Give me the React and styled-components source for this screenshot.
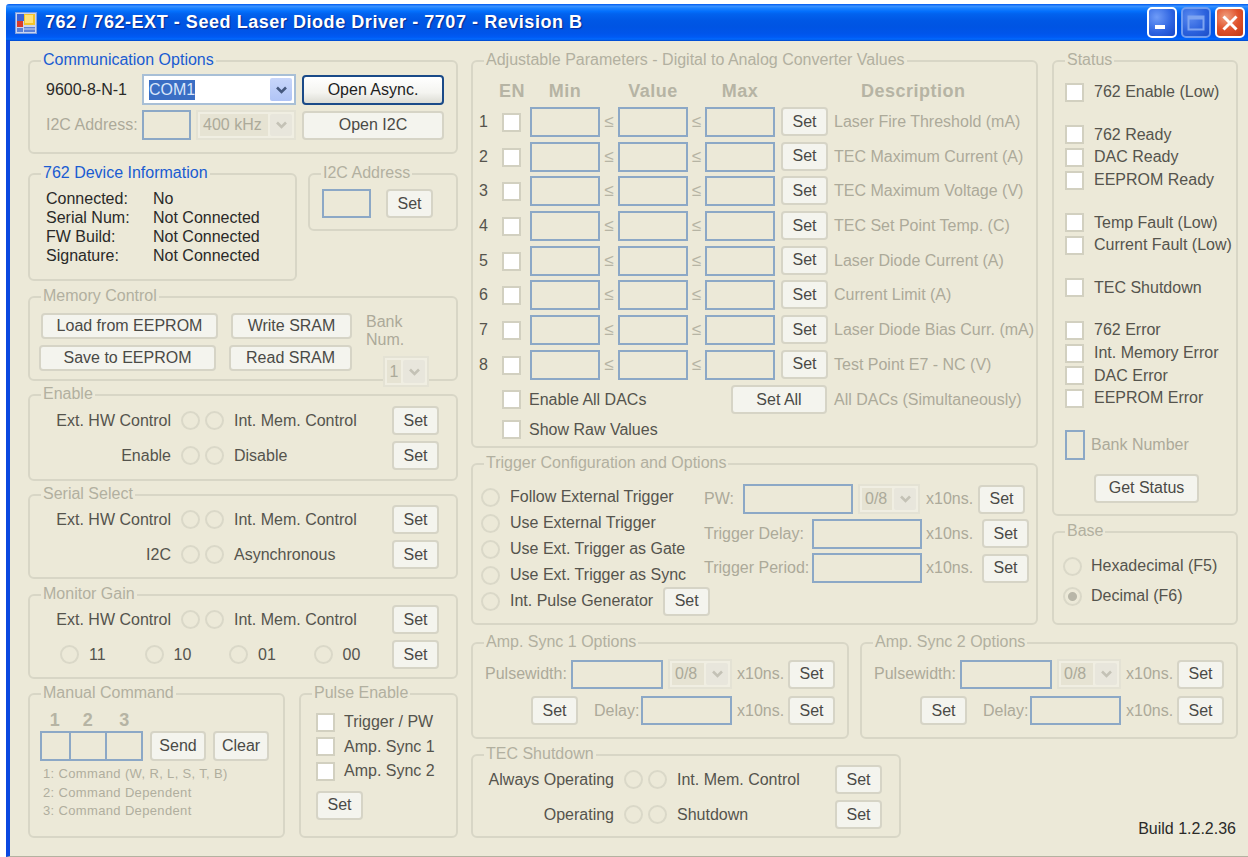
import { Fragment } from "react";
import styled, { createGlobalStyle } from "styled-components";

const FACE = "#ECE9D8";
const GREY = "#ACAA9A";
const MID = "#55544D";
const DARK = "#2A2A28";

const GlobalStyle = createGlobalStyle`
  html, body {
    margin: 0;
    background: #fff;
    overflow: hidden;
  }
  body {
    font-family: "Liberation Sans", Arial, sans-serif;
    font-size: 16px;
  }
`;

const Screen = styled.div`
  width: 1248px;
  height: 857px;
  box-sizing: border-box;
  padding: 4px 0 0 6px;
`;

const Win = styled.div`
  height: 853px;
  display: flex;
  flex-direction: column;
`;

const TitleBar = styled.header`
  height: 37px;
  flex: none;
  display: flex;
  align-items: center;
  padding: 0 3px 0 9px;
  border-radius: 3px 0 0 0;
  background: linear-gradient(180deg, #0058ee 0%, #3a93ff 6%, #1a80ff 12%, #036ffc 20%, #0262ee 27%, #0057e5 45%, #0054e3 62%, #0055eb 80%, #005bf5 90%, #026afe 95%, #0046c8 100%);
`;

const TitleText = styled.h1`
  margin: 0 0 0 8px;
  flex: 1;
  color: #fff;
  font-size: 18px;
  font-weight: 700;
  letter-spacing: 0.55px;
  white-space: nowrap;
  text-shadow: 1px 1px 1px #0a2a90;
`;

const WinButton = styled.div`
  width: 30px;
  height: 31px;
  box-sizing: border-box;
  margin-left: 4px;
  border: 2px solid ${(p) => (p.$dim ? "#6f9cf0" : "#fff")};
  border-radius: 5px;
  display: flex;
  align-items: center;
  justify-content: center;
  background: ${(p) =>
    p.$close
      ? "radial-gradient(circle at 35% 30%, #f0a080 0%, #e0522c 50%, #c23a14 100%)"
      : p.$dim
      ? "radial-gradient(circle at 30% 30%, #5a8af0 0%, #2a60dc 60%, #1c4ec8 100%)"
      : "radial-gradient(circle at 30% 30%, #6f9cf8 0%, #2c62e0 60%, #1848c8 100%)"};
`;

const WinBody = styled.main`
  flex: 1;
  display: flex;
  gap: 13px;
  padding: 19px 0 0 18px;
  background: ${FACE};
  border-left: 4px solid #0a48e0;
  border-bottom: 1px solid #b4b2a0;
`;

const LeftColumn = styled.div`
  width: 430px;
  flex: none;
`;

const RightColumn = styled.div`
  width: 767px;
  flex: none;
`;

const Row = styled.div`
  display: flex;
  gap: ${(p) => p.$gap || 0}px;
  margin-top: ${(p) => p.$mt || 0}px;
`;

const Group = styled.section`
  position: relative;
  box-sizing: border-box;
  flex: ${(p) => (p.$w ? "none" : "1")};
  width: ${(p) => (p.$w ? `${p.$w}px` : "auto")};
  height: ${(p) => p.$h}px;
  margin-top: ${(p) => p.$mt || 0}px;
  padding: ${(p) => p.$pad};
  border: 2px solid #d8d6c6;
  border-radius: 6px;
`;

const Legend = styled.span`
  position: absolute;
  top: -12px;
  left: 11px;
  padding: 0 2px;
  background: ${FACE};
  line-height: 20px;
  white-space: nowrap;
  color: ${(p) => (p.$blue ? "#1a5cd2" : "#b2b0a0")};
`;

const Text = styled.span`
  display: inline-block;
  flex: none;
  width: ${(p) => (p.$w ? `${p.$w}px` : "auto")};
  margin-left: ${(p) => p.$ml || 0}px;
  text-align: ${(p) => p.$align || "left"};
  white-space: nowrap;
  color: ${(p) => p.$color || MID};
`;

const Button = styled.button`
  flex: none;
  box-sizing: border-box;
  display: block;
  width: ${(p) => p.$w || 47}px;
  height: ${(p) => p.$h || 29}px;
  margin-left: ${(p) => p.$ml || 0}px;
  padding: 0;
  font: inherit;
  color: ${(p) => (p.$active ? "#1e1e1e" : "#4a4a46")};
  border: 2px solid ${(p) => (p.$active ? "#1a4a88" : "#d6d4c6")};
  border-radius: 4px;
  background: ${(p) =>
    p.$active
      ? "linear-gradient(180deg, #ffffff 0%, #f4f4f0 60%, #dcdcd4 100%)"
      : "#f4f4ee"};
`;

const TextBox = styled.input`
  flex: none;
  box-sizing: border-box;
  display: block;
  width: ${(p) => p.$w}px;
  height: ${(p) => p.$h || 30}px;
  margin: 0 0 0 ${(p) => p.$ml || 0}px;
  padding: 0;
  background: ${FACE};
  border: 2px solid #8ca8c6;
`;

const Check = styled.input.attrs({ type: "checkbox" })`
  appearance: none;
  flex: none;
  display: block;
  box-sizing: border-box;
  width: 19px;
  height: 19px;
  margin: 0;
  background: #fff;
  border: 2px solid #d2d0c0;
`;

const Radio = styled.input.attrs({ type: "radio" })`
  appearance: none;
  flex: none;
  display: block;
  box-sizing: border-box;
  width: 19px;
  height: 19px;
  margin: 0;
  border: 2px solid #dad8c8;
  border-radius: 50%;
  background: ${FACE};
  &:checked {
    background: radial-gradient(circle, #b8b6a8 0 4px, ${FACE} 5px);
  }
`;

const Combo = styled.div`
  flex: none;
  box-sizing: border-box;
  display: flex;
  width: ${(p) => p.$w}px;
  height: ${(p) => p.$h || 30}px;
  margin-left: ${(p) => p.$ml || 0}px;
  padding: 2px;
  background: ${(p) => (p.$off ? "#f0eee2" : "#fff")};
  border: 2px solid ${(p) => (p.$off ? "#e4e2d4" : "#a8bfd6")};
`;

const ComboValue = styled.div`
  flex: 1;
  display: flex;
  align-items: center;
  padding: 0 3px;
  margin-right: 2px;
  background: ${(p) => (p.$off ? "#e6e3d3" : "#fff")};
  color: ${(p) => (p.$off ? GREY : DARK)};
`;

const Selected = styled.span`
  background: #3a6ec4;
  color: #d8e6fa;
  line-height: 20px;
`;

const ComboArrow = styled.div`
  flex: none;
  width: 22px;
  display: flex;
  align-items: center;
  justify-content: center;
  border-radius: 2px;
  background: ${(p) => (p.$off ? "#e8e6dc" : "linear-gradient(180deg, #c8d6fa, #b0c4f6)")};
  color: ${(p) => (p.$off ? "#c4c2b6" : "#45587e")};
`;

const Chevron = () => (
  <svg width="13" height="10" viewBox="0 0 13 10">
    <path d="M2 2.5l4.5 4.5 4.5-4.5" fill="none" stroke="currentColor" strokeWidth="2.6" />
  </svg>
);

const ComboBox = ({ w, h, ml, off, children }) => (
  <Combo $w={w} $h={h} $ml={ml} $off={off}>
    <ComboValue $off={off}>{children}</ComboValue>
    <ComboArrow $off={off}>
      <Chevron />
    </ComboArrow>
  </Combo>
);

/* communication block */
const ControlRow = styled.div`
  display: flex;
  align-items: center;
  margin-top: ${(p) => p.$mt || 0}px;
`;

const InfoGrid = styled.div`
  display: grid;
  grid-template-columns: 107px 1fr;
  grid-auto-rows: 19px;
  line-height: 19px;
  color: ${DARK};
`;

const MemoryColumn = styled.div`
  flex: none;
  width: ${(p) => p.$w}px;
  display: flex;
  flex-direction: column;
  gap: 6px;
`;

const BankColumn = styled.div`
  width: 79px;
  margin-left: 14px;
  display: flex;
  flex-direction: column;
  align-items: center;
  gap: 7px;
  line-height: 18px;
  color: ${GREY};
`;

/* rows with a radio pair between two captions */
const ToggleStack = styled.div`
  display: flex;
  flex-direction: column;
  gap: 6px;
`;

const ToggleLine = styled.div`
  height: 29px;
  display: flex;
  align-items: center;
`;

const RadioPair = styled.div`
  display: flex;
  gap: 5px;
  margin: 0 10px;
`;

const GainOptions = styled.div`
  width: 351px;
  flex: none;
  box-sizing: border-box;
  padding-left: 19px;
  display: grid;
  grid-template-columns: repeat(3, 84.5px) 1fr;
`;

const GainOption = styled.div`
  display: flex;
  align-items: center;
  gap: 10px;
`;

const Toggle = ({ left, right }) => (
  <ToggleLine>
    <Text $w={130} $align="right">{left}</Text>
    <RadioPair>
      <Radio disabled />
      <Radio disabled />
    </RadioPair>
    <Text $w={158}>{right}</Text>
    <Button>Set</Button>
  </ToggleLine>
);

/* manual command */
const ByteHeads = styled.div`
  display: grid;
  grid-template-columns: 30px 36px 37px;
  height: 21px;
  line-height: 21px;
  font-weight: 700;
  font-size: 18px;
  letter-spacing: 0.5px;
  text-align: center;
  color: #b6b4a4;
`;

const ByteCell = styled(TextBox)`
  & + & {
    margin-left: -2px;
  }
`;

const HintList = styled.div`
  margin: 4px 0 0 3px;
  font-size: 13px;
  letter-spacing: 0.35px;
  line-height: 18.5px;
  color: #b0ae9e;
`;

const CheckLine = styled.label`
  display: flex;
  align-items: center;
  gap: ${(p) => p.$gap || 9}px;
  height: ${(p) => p.$h}px;
  margin-top: ${(p) => p.$mt || 0}px;
  color: ${(p) => p.$color || MID};
  white-space: nowrap;
`;

/* DAC table */
const DacGrid = styled.div`
  display: grid;
  grid-template-columns: 23px 28px 70px 18px 70px 17px 70px 6px 47px 6px 1fr;
  grid-auto-rows: 34.7px;
  align-items: start;
  white-space: nowrap;
`;

const DacHeads = styled(DacGrid)`
  grid-auto-rows: 24px;
  margin-bottom: 4px;
  align-items: center;
  font-size: 18px;
  font-weight: 700;
  letter-spacing: 0.5px;
  color: #b6b4a4;
  text-align: center;
`;

const DacCell = styled.div`
  grid-column: ${(p) => p.$col};
  height: 30px;
  line-height: 30px;
  text-align: ${(p) => p.$align || "left"};
  color: ${(p) => p.$color || GREY};
`;

const HeadCell = styled.div`
  grid-column: ${(p) => p.$col};
  text-align: ${(p) => p.$align || "center"};
  margin-left: ${(p) => p.$ml || 0}px;
`;

const CheckCell = styled.div`
  grid-column: 2;
  padding-top: 6px;
`;

const Leq = styled(DacCell)`
  text-align: center;
  color: #b6b4a4;
  font-size: 17px;
`;

const ExtraLine = styled.div`
  display: flex;
  align-items: center;
  height: ${(p) => p.$h}px;
  margin-left: 23px;
  color: ${MID};
  white-space: nowrap;
`;

/* trigger */
const TriggerColumns = styled.div`
  display: flex;
`;

const TriggerModes = styled.div`
  width: 223px;
  flex: none;
  display: grid;
  grid-auto-rows: 26px;
`;

const ModeLine = styled.label`
  display: flex;
  align-items: center;
  gap: 10px;
  color: ${MID};
  white-space: nowrap;
`;

const TriggerTimes = styled.div`
  display: flex;
  flex-direction: column;
  gap: 4.5px;
`;

const paramRows = [
  "Laser Fire Threshold  (mA)",
  "TEC Maximum Current  (A)",
  "TEC Maximum Voltage  (V)",
  "TEC Set Point Temp.  (C)",
  "Laser Diode Current  (A)",
  "Current Limit  (A)",
  "Laser Diode Bias Curr.  (mA)",
  "Test Point E7 - NC  (V)",
];

const statusBlocks = [
  { gap: 0, items: ["762 Enable (Low)"] },
  { gap: 20, items: ["762 Ready", "DAC Ready", "EEPROM Ready"] },
  { gap: 20, items: ["Temp Fault (Low)", "Current Fault (Low)"] },
  { gap: 20, items: ["TEC Shutdown"] },
  { gap: 20, items: ["762 Error", "Int. Memory Error", "DAC Error", "EEPROM Error"] },
];

const AmpSync = ({ name, w }) => (
  <Group $w={w} $h={97} $pad="15px 0 0 12px">
    <Legend>{name}</Legend>
    <ControlRow>
      <Text $w={86} $color={GREY}>Pulsewidth:</Text>
      <TextBox $w={92} $h={29} />
      <ComboBox w={64} h={30} ml={5} off>0/8</ComboBox>
      <Text $w={51} $ml={5} $color={GREY}>x10ns.</Text>
      <Button>Set</Button>
    </ControlRow>
    <ControlRow $mt={7}>
      <Button $ml={46}>Set</Button>
      <Text $w={47} $ml={16} $color={GREY}>Delay:</Text>
      <TextBox $w={91} $h={29} />
      <Text $w={51} $ml={5} $color={GREY}>x10ns.</Text>
      <Button>Set</Button>
    </ControlRow>
  </Group>
);

const AppIcon = () => (
  <svg width="22" height="22" viewBox="0 0 22 22">
    <rect x="0.5" y="0.5" width="21" height="21" fill="#c8d4f0" stroke="#7f9fe0" />
    <rect x="2" y="2" width="7" height="7" fill="#3a64d8" />
    <rect x="9" y="2" width="11" height="11" fill="#f2c42c" />
    <rect x="10" y="3" width="8" height="8" fill="#ffe27a" />
    <rect x="2" y="9" width="6" height="6" fill="#d83a2a" />
    <rect x="2" y="16" width="6" height="4" fill="#5a80d8" />
    <rect x="9" y="15" width="11" height="5" fill="#5a80d8" />
    <path d="M9 17h11" stroke="#c8d4f0" />
  </svg>
);

export default function App() {
  return (
    <Screen>
      <GlobalStyle />
      <Win>
        <TitleBar>
          <AppIcon />
          <TitleText>762 / 762-EXT - Seed Laser Diode Driver - 7707 - Revision B</TitleText>
          <WinButton>
            <svg width="20" height="20" viewBox="0 0 20 20">
              <rect x="3" y="12" width="10" height="4" fill="#fff" />
            </svg>
          </WinButton>
          <WinButton $dim>
            <svg width="20" height="20" viewBox="0 0 20 20">
              <path d="M2.5 3.5h15v13h-15z" fill="none" stroke="#7ea4f0" strokeWidth="2" />
              <path d="M2 5h16" stroke="#7ea4f0" strokeWidth="3" />
            </svg>
          </WinButton>
          <WinButton $close>
            <svg width="20" height="20" viewBox="0 0 20 20">
              <path d="M3.5 3.5l13 13M16.5 3.5l-13 13" stroke="#fff" strokeWidth="3" />
            </svg>
          </WinButton>
        </TitleBar>

        <WinBody>
          <LeftColumn>
            <Group $h={94} $pad="12px 0 0 16px">
              <Legend $blue>Communication Options</Legend>
              <ControlRow>
                <Text $w={96} $color={DARK}>9600-8-N-1</Text>
                <ComboBox w={154} h={31}>
                  <Selected>COM1</Selected>
                </ComboBox>
                <Button $w={142} $h={30} $ml={6} $active>Open Async.</Button>
              </ControlRow>
              <ControlRow $mt={5}>
                <Text $w={96} $color={GREY}>I2C Address:</Text>
                <TextBox $w={49} />
                <ComboBox w={100} ml={5} off>400 kHz</ComboBox>
                <Button $w={142} $ml={6}>Open I2C</Button>
              </ControlRow>
            </Group>

            <Row $gap={11} $mt={19}>
              <Group $w={269} $h={108} $pad="14px 0 0 16px">
                <Legend $blue>762 Device Information</Legend>
                <InfoGrid>
                  <span>Connected:</span><span>No</span>
                  <span>Serial Num:</span><span>Not Connected</span>
                  <span>FW Build:</span><span>Not Connected</span>
                  <span>Signature:</span><span>Not Connected</span>
                </InfoGrid>
              </Group>
              <Group $h={58} $pad="14px 0 0 12px">
                <Legend>I2C Address</Legend>
                <ControlRow>
                  <TextBox $w={49} $h={29} />
                  <Button $ml={15}>Set</Button>
                </ControlRow>
              </Group>
            </Row>

            <Group $h={85} $mt={15} $pad="15px 0 0 9px">
              <Legend>Memory Control</Legend>
              <Row>
                <MemoryColumn $w={190}>
                  <Button $w={177} $h={26} $ml={2}>Load from EEPROM</Button>
                  <Button $w={177} $h={26}>Save to EEPROM</Button>
                </MemoryColumn>
                <MemoryColumn $w={123}>
                  <Button $w={121} $h={26} $ml={2}>Write SRAM</Button>
                  <Button $w={123} $h={26}>Read SRAM</Button>
                </MemoryColumn>
                <BankColumn>
                  <span>Bank Num.</span>
                  <ComboBox w={46} h={31} off>1</ComboBox>
                </BankColumn>
              </Row>
            </Group>

            <Group $h={87} $mt={13} $pad="10px 0 0 11px">
              <Legend>Enable</Legend>
              <ToggleStack>
                <Toggle left="Ext. HW Control" right="Int. Mem. Control" />
                <Toggle left="Enable" right="Disable" />
              </ToggleStack>
            </Group>

            <Group $h={85} $mt={13} $pad="9px 0 0 11px">
              <Legend>Serial Select</Legend>
              <ToggleStack>
                <Toggle left="Ext. HW Control" right="Int. Mem. Control" />
                <Toggle left="I2C" right="Asynchronous" />
              </ToggleStack>
            </Group>

            <Group $h={85} $mt={15} $pad="9px 0 0 11px">
              <Legend>Monitor Gain</Legend>
              <ToggleStack>
                <Toggle left="Ext. HW Control" right="Int. Mem. Control" />
                <ToggleLine>
                  <GainOptions>
                    {["11", "10", "01", "00"].map((v) => (
                      <GainOption key={v}>
                        <Radio disabled />
                        <Text>{v}</Text>
                      </GainOption>
                    ))}
                  </GainOptions>
                  <Button>Set</Button>
                </ToggleLine>
              </ToggleStack>
            </Group>

            <Row $gap={14} $mt={14}>
              <Group $w={257} $h={145} $pad="15px 0 0 10px">
                <Legend>Manual Command</Legend>
                <ByteHeads>
                  <span>1</span><span>2</span><span>3</span>
                </ByteHeads>
                <ControlRow>
                  <ByteCell $w={31} />
                  <ByteCell $w={38} />
                  <ByteCell $w={38} />
                  <Button $w={56} $h={30} $ml={7}>Send</Button>
                  <Button $w={56} $h={30} $ml={7}>Clear</Button>
                </ControlRow>
                <HintList>
                  <div>1: Command (W, R, L, S, T, B)</div>
                  <div>2: Command Dependent</div>
                  <div>3: Command Dependent</div>
                </HintList>
              </Group>
              <Group $h={145} $pad="15px 0 0 15px">
                <Legend>Pulse Enable</Legend>
                <CheckLine $h={24.5}><Check disabled />Trigger / PW</CheckLine>
                <CheckLine $h={24.5}><Check disabled />Amp. Sync 1</CheckLine>
                <CheckLine $h={24.5}><Check disabled />Amp. Sync 2</CheckLine>
                <Button style={{ marginTop: 7 }}>Set</Button>
              </Group>
            </Row>
          </LeftColumn>

          <RightColumn>
            <Row $gap={14}>
              <div style={{ width: 567, flex: "none" }}>
                <Group $h={388} $pad="17px 0 0 6px">
                  <Legend>Adjustable Parameters - Digital to Analog Converter Values</Legend>
                  <DacHeads>
                    <HeadCell $col="2" $align="left" $ml={-3}>EN</HeadCell>
                    <HeadCell $col="3">Min</HeadCell>
                    <HeadCell $col="5">Value</HeadCell>
                    <HeadCell $col="7">Max</HeadCell>
                    <HeadCell $col="11" $align="left" $ml={27}>Description</HeadCell>
                  </DacHeads>
                  <DacGrid>
                    {paramRows.map((desc, i) => (
                      <Fragment key={desc}>
                        <DacCell $col="1" $color={MID}>{i + 1}</DacCell>
                        <CheckCell><Check disabled /></CheckCell>
                        <TextBox $w={70} />
                        <Leq $col="4">≤</Leq>
                        <TextBox $w={70} />
                        <Leq $col="6">≤</Leq>
                        <TextBox $w={70} />
                        <Button style={{ gridColumn: 9 }}>Set</Button>
                        <DacCell $col="11">{desc}</DacCell>
                      </Fragment>
                    ))}
                  </DacGrid>
                  <ExtraLine $h={30} style={{ marginTop: 0 }}>
                    <Check disabled />
                    <Text $w={202} $ml={8}>Enable All DACs</Text>
                    <Button $w={96}>Set All</Button>
                    <Text $ml={7} $color={GREY}>All DACs (Simultaneously)</Text>
                  </ExtraLine>
                  <ExtraLine $h={30}>
                    <Check disabled />
                    <Text $ml={8}>Show Raw Values</Text>
                  </ExtraLine>
                </Group>

                <Group $h={162} $mt={15} $pad="19px 0 0 8px">
                  <Legend>Trigger Configuration and Options</Legend>
                  <TriggerColumns>
                    <TriggerModes>
                      <ModeLine><Radio disabled />Follow External Trigger</ModeLine>
                      <ModeLine><Radio disabled />Use External Trigger</ModeLine>
                      <ModeLine><Radio disabled />Use Ext. Trigger as Gate</ModeLine>
                      <ModeLine><Radio disabled />Use Ext. Trigger as Sync</ModeLine>
                      <ModeLine>
                        <Radio disabled />Int. Pulse Generator
                        <Button $ml={0}>Set</Button>
                      </ModeLine>
                    </TriggerModes>
                    <TriggerTimes>
                      <ControlRow>
                        <Text $w={39} $color={GREY}>PW:</Text>
                        <TextBox $w={110} />
                        <ComboBox w={62} ml={5} off>0/8</ComboBox>
                        <Text $w={52} $ml={6} $color={GREY}>x10ns.</Text>
                        <Button>Set</Button>
                      </ControlRow>
                      <ControlRow>
                        <Text $w={108} $color={GREY}>Trigger Delay:</Text>
                        <TextBox $w={110} />
                        <Text $w={56} $ml={4} $color={GREY}>x10ns.</Text>
                        <Button>Set</Button>
                      </ControlRow>
                      <ControlRow>
                        <Text $w={108} $color={GREY}>Trigger Period:</Text>
                        <TextBox $w={110} />
                        <Text $w={56} $ml={4} $color={GREY}>x10ns.</Text>
                        <Button>Set</Button>
                      </ControlRow>
                    </TriggerTimes>
                  </TriggerColumns>
                </Group>
              </div>

              <div style={{ width: 186, flex: "none" }}>
                <Group $h={456} $pad="19px 0 0 11px">
                  <Legend>Status</Legend>
                  {statusBlocks.map((block) => (
                    <div key={block.items[0]} style={{ marginTop: block.gap }}>
                      {block.items.map((item) => (
                        <CheckLine key={item} $h={22.6} $gap={10}>
                          <Check disabled />
                          {item}
                        </CheckLine>
                      ))}
                    </div>
                  ))}
                  <ControlRow $mt={20}>
                    <TextBox $w={20} />
                    <Text $ml={6} $color={GREY}>Bank Number</Text>
                  </ControlRow>
                  <Button $w={105} $ml={29} style={{ marginTop: 14 }}>Get Status</Button>
                </Group>

                <Group $h={94} $mt={15} $pad="18px 0 0 9px">
                  <Legend>Base</Legend>
                  <CheckLine $h={30}><Radio disabled />Hexadecimal (F5)</CheckLine>
                  <CheckLine $h={30}><Radio disabled defaultChecked />Decimal (F6)</CheckLine>
                </Group>
              </div>
            </Row>

            <Row $gap={11} $mt={17}>
              <AmpSync name="Amp. Sync 1 Options" w={378} />
              <AmpSync name="Amp. Sync 2 Options" w={378} />
            </Row>

            <Row $mt={15}>
              <Group $w={430} $h={84} $pad="9px 0 0 11px">
                <Legend>TEC Shutdown</Legend>
                <ToggleStack>
                  <Toggle left="Always Operating" right="Int. Mem. Control" />
                  <Toggle left="Operating" right="Shutdown" />
                </ToggleStack>
              </Group>
              <BuildTag>Build 1.2.2.36</BuildTag>
            </Row>
          </RightColumn>
        </WinBody>
      </Win>
    </Screen>
  );
}

const BuildTag = styled.div`
  flex: 1;
  align-self: flex-end;
  padding: 0 2px 0 0;
  text-align: right;
  line-height: 18px;
  margin-bottom: 0;
  color: ${DARK};
`;
